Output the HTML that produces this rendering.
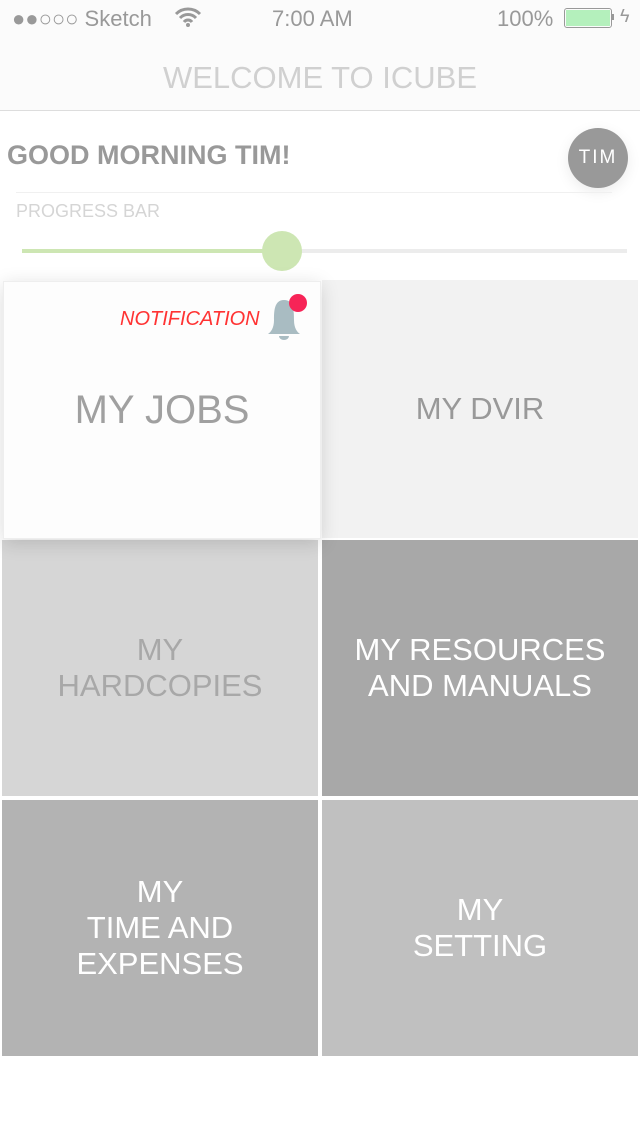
<!DOCTYPE html>
<html><head><style>
body{margin:0;width:640px;height:1136px;background:#fff;font-family:"Liberation Sans",sans-serif;position:relative;overflow:hidden}
.a{position:absolute}
.t{position:absolute;display:flex;align-items:center;justify-content:center;text-align:center;font-size:31px;line-height:36px}
</style></head><body>
<div class="a" style="left:0;top:0;width:640px;height:110px;background:#fbfbfb;border-bottom:1px solid #ddd"></div>
<div class="a" style="left:12px;top:6px;font-size:22px;color:#999">●●○○○ Sketch</div>
<svg class="a" style="left:174px;top:6px" width="28" height="22" viewBox="0 0 28 22"><path d="M2 8a17 17 0 0 1 24 0M6 12a11 11 0 0 1 16 0M10 16a5 5 0 0 1 8 0" stroke="#999" stroke-width="3" fill="none"/><circle cx="14" cy="19" r="2" fill="#999"/></svg>
<div class="a" style="left:272px;top:6px;font-size:22px;color:#999">7:00 AM</div>
<div class="a" style="left:497px;top:6px;font-size:22px;color:#999">100%</div>
<div class="a" style="left:564px;top:8px;width:44px;height:16px;border:1px solid #999;border-radius:3px;padding:1px;box-sizing:content-box"><div style="width:44px;height:16px;background:#b4f0bc"></div></div>
<div class="a" style="left:611px;top:14px;width:3px;height:6px;background:#999"></div>
<div class="a" style="left:620px;top:6px;font-size:18px;color:#999">ϟ</div>
<div class="a" style="left:0;top:60px;width:640px;text-align:center;font-size:31px;color:#d0d0d0">WELCOME TO ICUBE</div>
<div class="a" style="left:7px;top:140px;font-size:27px;color:#999;font-weight:bold">GOOD MORNING TIM!</div>
<div class="a" style="left:568px;top:128px;width:60px;height:60px;border-radius:50%;background:#999;color:#fff;font-size:19px;letter-spacing:2px;display:flex;align-items:center;justify-content:center;box-shadow:0 4px 14px rgba(0,0,0,.08)">TIM</div>
<div class="a" style="left:16px;top:192px;width:596px;height:1px;background:#f0f0f0"></div>
<div class="a" style="left:16px;top:201px;font-size:18px;color:#d5d5d5">PROGRESS BAR</div>
<div class="a" style="left:22px;top:249px;width:605px;height:4px;background:#ececec"></div>
<div class="a" style="left:22px;top:249px;width:260px;height:4px;background:#cde6b3"></div>
<div class="a" style="left:262px;top:231px;width:40px;height:40px;border-radius:50%;background:#cde6b3"></div>
<div class="t" style="left:322px;top:280px;width:316px;height:258px;background:#f2f2f2;color:#999">MY DVIR</div>
<div class="t" style="left:2px;top:540px;width:316px;height:256px;background:#d6d6d6;color:#a8a8a8">MY<br>HARDCOPIES</div>
<div class="t" style="left:322px;top:540px;width:316px;height:256px;background:#a8a8a8;color:#fff">MY RESOURCES<br>AND MANUALS</div>
<div class="t" style="left:2px;top:800px;width:316px;height:256px;background:#b3b3b3;color:#fff">MY<br>TIME AND<br>EXPENSES</div>
<div class="t" style="left:322px;top:800px;width:316px;height:256px;background:#c0c0c0;color:#fff">MY<br>SETTING</div>
<div class="t" style="left:3px;top:281px;width:316px;height:256px;background:#fdfdfd;color:#a0a0a0;font-size:40px;box-shadow:0 4px 18px rgba(0,0,0,.15);border:1px solid #eee">MY JOBS</div>
<div class="a" style="left:120px;top:308px;font-size:20px;font-style:italic;color:#f33">NOTIFICATION</div>
<svg class="a" style="left:262px;top:292px" width="48" height="56" viewBox="0 0 48 56"><path d="M22 8c-10 0-10 12-10 20s-3 12-6 14h32c-3-2-6-6-6-14s0-20-10-20z" fill="#a9bcc2"/><path d="M17 44h10a5 4 0 0 1-10 0z" fill="#a9bcc2"/><circle cx="36" cy="11" r="9" fill="#f72457"/></svg>
</body></html>
